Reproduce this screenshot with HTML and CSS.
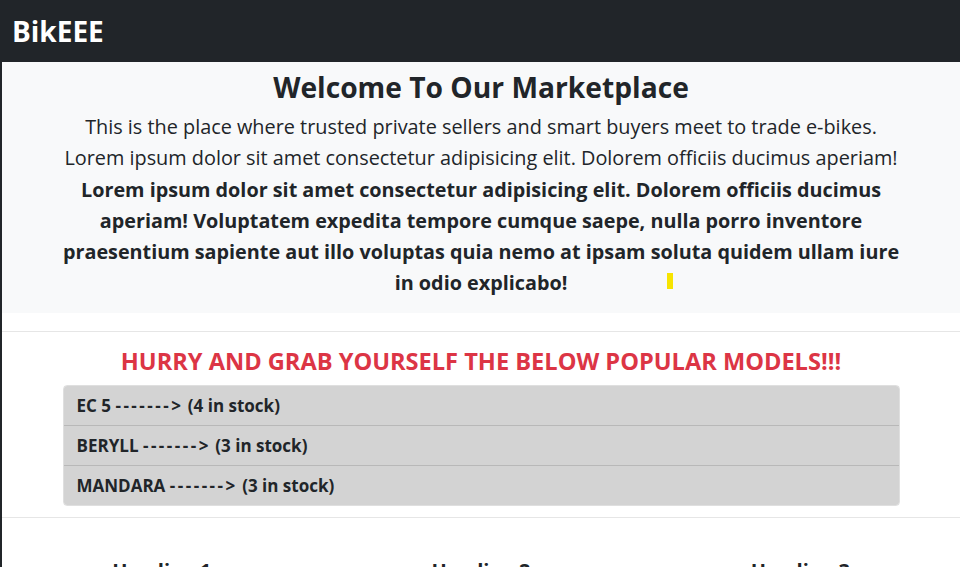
FILE: index.html
```html
<!DOCTYPE html>
<html lang="en">
<head>
<meta charset="utf-8">
<title>BikEEE</title>
<link rel="stylesheet" href="styles.css">
</head>
<body>
<nav class="navbar">
  <span class="brand">BikEEE</span>
</nav>
<main class="main">
  <section class="hero">
    <h1 class="hero-title">Welcome To Our Marketplace</h1>
    <p class="lead">This is the place where trusted private sellers and smart buyers meet to trade e-bikes.<br>Lorem ipsum dolor sit amet consectetur adipisicing elit. Dolorem officiis ducimus aperiam!</p>
    <p class="lead-bold">Lorem ipsum dolor sit amet consectetur adipisicing elit. Dolorem officiis ducimus aperiam! Voluptatem expedita tempore cumque saepe, nulla porro inventore praesentium sapiente aut illo voluptas quia nemo at ipsam soluta quidem ullam iure in odio explicabo!</p>
    <span class="caret-mark"></span>
  </section>
  <hr class="divider">
  <section class="popular">
    <h2 class="hurry">HURRY AND GRAB YOURSELF THE BELOW POPULAR MODELS!!!</h2>
    <ul class="list">
      <li class="list-item">EC 5 <span class="dashes">-------&gt;</span> (4 in stock)</li>
      <li class="list-item">BERYLL <span class="dashes">-------&gt;</span> (3 in stock)</li>
      <li class="list-item">MANDARA <span class="dashes">-------&gt;</span> (3 in stock)</li>
    </ul>
  </section>
  <hr class="divider divider-2">
  <section class="columns">
    <div class="col"><h3 class="col-title">Heading 1</h3></div>
    <div class="col"><h3 class="col-title">Heading 2</h3></div>
    <div class="col"><h3 class="col-title">Heading 3</h3></div>
  </section>
</main>
</body>
</html>
```
FILE: styles.css
```css
* { box-sizing: border-box; }
html, body { margin: 0; padding: 0; }
body {
  background: #212529;
  font-family: "Open Sans", "Noto Sans", sans-serif;
  color: #212529;
}
.navbar {
  height: 62px;
  background: #212529;
  padding: 14px 12px 0;
}
.brand {
  color: #fff;
  font-weight: 700;
  font-size: 28px;
  line-height: 34px;
}
.main {
  margin-left: 2px;
  background: #fff;
  min-height: 505px;
  overflow: hidden;
}
.hero {
  position: relative;
  background: #f8f9fa;
  text-align: center;
  padding: 7px 50px 13px;
  height: 251px;
}
.hero-title {
  margin: 0 0 6px;
  font-size: 28.2px;
  line-height: 36px;
  font-weight: 700;
}
.lead, .lead-bold {
  margin: 0;
  font-size: 19.85px;
  line-height: 31.3px;
}
.lead { font-weight: 400; }
.lead-bold { font-weight: 700; font-size: 19.8px; }
.caret-mark {
  position: absolute;
  left: 665px;
  top: 211px;
  width: 6px;
  height: 16px;
  background: #f7e400;
}
.divider {
  margin: 18px 0 0;
  border: 0;
  border-top: 1px solid #e6e6e6;
}
.popular { padding: 15px 0 0; }
.hurry {
  margin: 0 0 10px;
  text-align: center;
  color: #dc3545;
  font-size: 23.6px;
  line-height: 28px;
  font-weight: 700;
}
.list {
  list-style: none;
  margin: 0 auto;
  padding: 0;
  width: 837px;
  border-radius: 4px;
  overflow: hidden;
  border: 1px solid rgba(0,0,0,.125);
}
.list-item {
  background: #d3d3d3;
  font-weight: 700;
  font-size: 17px;
  line-height: 25px;
  padding: 7px 13px;
}
.dashes { letter-spacing: 2.5px; }
.list-item + .list-item { border-top: 1px solid rgba(0,0,0,.125); }
.divider-2 { margin-top: 11px; }
.columns {
  display: grid;
  grid-template-columns: repeat(3, 1fr);
  padding-top: 41px;
}
.col { text-align: center; }
.col-title {
  margin: 0;
  font-size: 20px;
  line-height: 24px;
  font-weight: 700;
}
```
